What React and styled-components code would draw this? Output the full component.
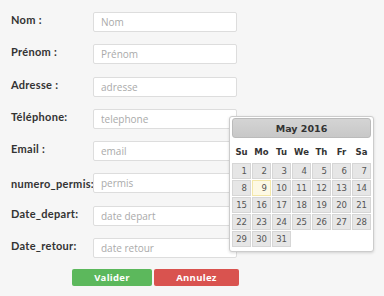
import styled, { createGlobalStyle } from 'styled-components';

const Global = createGlobalStyle`
body{
    margin: 0;
    background-color: #f6f6f6;
    font-family: "Open Sans", "Liberation Sans", sans-serif;
}
`;

const Page = styled.div`
position: relative;
width: 384px;
height: 296px;
overflow: hidden;
padding: 12px 0 0 11px;
box-sizing: border-box;
`;

const Form = styled.form`
display: flex;
flex-direction: column;
gap: 12.3px;
`;

const Row = styled.div`
display: flex;
align-items: flex-start;
`;

const Label = styled.label`
width: 82px;
padding-top: ${p => p.$top || 2}px;
font-family: Lato, "Open Sans", sans-serif;
font-size: 11px;
font-weight: 700;
color: #333;
letter-spacing: 0.3px;
white-space: nowrap;
`;

const Input = styled.input`
width: 144px;
height: 20px;
box-sizing: border-box;
border: 1px solid #ddd;
border-radius: 2px;
background: #fff;
padding: 0 7px;
font-family: "Open Sans", "Liberation Sans", sans-serif;
font-size: 10px;
outline: none;
&::placeholder{
    color: #aaa;
}
`;

const Buttons = styled.div`
display: flex;
gap: 2px;
margin: -1px 0 0 61px;
`;

const Button = styled.button`
width: ${p => p.$w}px;
height: 17px;
border: none;
border-radius: 2px;
background-color: ${p => p.$bg};
color: #fff;
font-family: "Open Sans", "Liberation Sans", sans-serif;
font-size: 9.5px;
font-weight: 700;
letter-spacing: 0.3px;
padding: 0;
`;

const Picker = styled.div`
position: absolute;
left: 229px;
top: 116px;
width: 145px;
height: 136px;
box-sizing: border-box;
padding: 1px 2px;
background: #fff;
border: 1px solid #ccc;
border-radius: 3px;
box-shadow: 0 1px 3px rgba(0,0,0,0.15);
font-family: "DejaVu Sans", Verdana, sans-serif;
`;

const Header = styled.div`
height: 20px;
display: flex;
align-items: center;
justify-content: center;
background: linear-gradient(#d4d4d4, #c8c8c8);
border: 1px solid #bbb;
border-radius: 3px;
box-sizing: border-box;
font-size: 9.5px;
font-weight: 700;
color: #333;
`;

const Grid = styled.div`
display: grid;
grid-template-columns: repeat(7, 19px);
grid-template-rows: 21px;
grid-auto-rows: 16px;
gap: 1px;
margin-top: 3px;
`;

const DayName = styled.div`
display: flex;
align-items: center;
justify-content: center;
font-size: 8.5px;
font-weight: 700;
color: #333;
`;

const Cell = styled.div`
box-sizing: border-box;
border: 1px solid ${p => p.$today ? '#f3e7a8' : '#d6d6d6'};
background: ${p => p.$today ? '#fdf9e4' : '#e6e6e6'};
color: #555;
font-size: 8.5px;
text-align: right;
padding-right: 3px;
line-height: 14px;
`;

const fields = [
    ['Nom :', 'Nom'],
    ['Prénom :', 'Prénom'],
    ['Adresse :', 'adresse'],
    ['Téléphone:', 'telephone'],
    ['Email :', 'email'],
    ['numero_permis:', 'permis'],
    ['Date_depart:', 'date depart'],
    ['Date_retour:', 'date retour'],
];

const days = ['Su', 'Mo', 'Tu', 'We', 'Th', 'Fr', 'Sa'];

function App(){
    const dates = [];
    for(let i = 1; i <= 31; i++) dates.push(i);

    return(
        <Page>
            <Global/>
            <Form>
                {fields.map(([label, ph], index) => (
                    <Row key={index}>
                        <Label $top={index === 5 ? 4 : 1}>{label}</Label>
                        <Input placeholder={ph}/>
                    </Row>
                ))}
                <Buttons>
                    <Button type="button" $w={80} $bg="#5cb85c">Valider</Button>
                    <Button type="button" $w={85} $bg="#d9534f">Annulez</Button>
                </Buttons>
            </Form>
            <Picker>
                <Header>May 2016</Header>
                <Grid>
                    {days.map(d => <DayName key={d}>{d}</DayName>)}
                    {dates.map(d => <Cell key={d} $today={d === 9}>{d}</Cell>)}
                </Grid>
            </Picker>
        </Page>
    )
}

export default App
